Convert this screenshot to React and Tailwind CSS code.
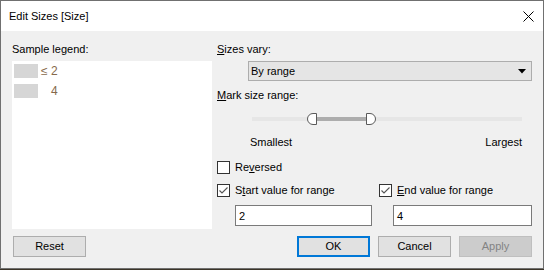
const Check = ({ checked, label }) => (
  <div className="flex items-center h-[13px]">
    <span className="w-[13px] h-[13px] border border-[#333333] bg-white flex items-center justify-center shrink-0">
      {checked && (
        <svg width="11" height="11" viewBox="0 0 11 11">
          <polyline points="1.5,5.5 4,8 9.5,2.5" fill="none" stroke="#555555" strokeWidth="1.1" />
        </svg>
      )}
    </span>
    <span className="ml-[5px] leading-[13px]">{label}</span>
  </div>
);

const Button = ({ children, primary, disabled }) => (
  <button
    className={
      primary
        ? 'w-[73px] h-[21px] border-2 border-[#0078d7] bg-[#e1e1e1] leading-none'
        : disabled
        ? 'w-[73px] h-[21px] border border-[#bfbfbf] bg-[#cccccc] text-[#838383] leading-none'
        : 'w-[73px] h-[21px] border border-[#adadad] bg-[#e1e1e1] leading-none'
    }
  >
    {children}
  </button>
);

const App = () => {
  return (
    <div className="w-[544px] h-[270px] bg-[#3b3428] font-['Liberation_Sans',Arial,sans-serif] text-[11px] text-black">
      <div className="w-[544px] h-[269px] border border-[#707070] bg-[#f0f0f0] flex flex-col">
        <div className="h-[30px] bg-white flex items-center justify-between pl-[8px] pr-[9px]">
          <span className="leading-[14px]">Edit Sizes [Size]</span>
          <svg width="11" height="11" viewBox="0 0 11 11">
            <path d="M0.5 0.5 L10.5 10.5 M10.5 0.5 L0.5 10.5" stroke="#000" strokeWidth="1" />
          </svg>
        </div>

        <div className="flex flex-col pt-[11px]">
          <div className="flex">
            <div className="ml-[11px] w-[200px] flex flex-col">
              <div className="h-[14px] leading-[14px]">Sample legend:</div>
              <div className="mt-[5px] h-[168px] bg-white pt-[3px] pl-[2px] flex flex-col gap-[6px] text-[12px] text-[#86694b]">
                <div className="flex items-center h-[14px]">
                  <span className="w-[24px] h-[14px] bg-[#d6d6d6]" />
                  <span className="ml-[3px] leading-[14px]">≤ 2</span>
                </div>
                <div className="flex items-center h-[14px]">
                  <span className="w-[24px] h-[14px] bg-[#d6d6d6]" />
                  <span className="ml-[13px] leading-[14px]">4</span>
                </div>
              </div>
            </div>

            <div className="ml-[5px] w-[315px] flex flex-col">
              <div className="h-[14px] leading-[14px]">
                <u>S</u>izes vary:
              </div>
              <div className="mt-[5px] ml-[31px] w-[284px] h-[20px] bg-[#e5e5e5] border border-[#adadad] flex items-center justify-between pl-[2px] pr-[5px]">
                <span className="leading-[14px]">By range</span>
                <svg width="8" height="5" viewBox="0 0 8 5">
                  <path d="M0 0 H8 L4 4.5 Z" fill="#000" />
                </svg>
              </div>
              <div className="mt-[7px] h-[14px] leading-[14px]">
                <u>M</u>ark size range:
              </div>
              <div className="mt-[11px] ml-[35px] w-[270px] h-[12px] relative flex items-center">
                <div className="w-full h-[4px] bg-[#e6e6e6]" />
                <div className="absolute left-[64px] w-[50px] h-[4px] top-[4px] bg-[#adadad]" />
                <div className="absolute left-[55px] top-0 w-[10px] h-[12px] bg-white border border-[#5a5a5a] rounded-l-full" />
                <div className="absolute left-[114px] top-0 w-[10px] h-[12px] bg-white border border-[#5a5a5a] rounded-r-full" />
              </div>
              <div className="mt-[10px] ml-[33px] w-[272px] h-[14px] leading-[14px] flex justify-between">
                <span>Smallest</span>
                <span>Largest</span>
              </div>
              <div className="mt-[12px]">
                <Check label={<>Re<u>v</u>ersed</>} />
              </div>
              <div className="mt-[10px] flex">
                <div className="w-[162px]">
                  <Check checked label={<>S<u>t</u>art value for range</>} />
                </div>
                <Check checked label={<><u>E</u>nd value for range</>} />
              </div>
              <div className="mt-[8px] flex">
                <div className="ml-[18px] w-[137px] h-[21px] bg-white border border-[#7a7a7a] flex items-center pl-[3px]">
                  <span className="leading-[14px]">2</span>
                </div>
                <div className="ml-[21px] w-[139px] h-[21px] bg-white border border-[#7a7a7a] flex items-center pl-[3px]">
                  <span className="leading-[14px]">4</span>
                </div>
              </div>
            </div>
          </div>

          <div className="mt-[7px] flex items-center pl-[12px] pr-[11px]">
            <Button>Reset</Button>
            <div className="ml-auto flex gap-[8px]">
              <Button primary>OK</Button>
              <Button>Cancel</Button>
              <Button disabled>Apply</Button>
            </div>
          </div>
        </div>
      </div>
    </div>
  );
};

export default App;
